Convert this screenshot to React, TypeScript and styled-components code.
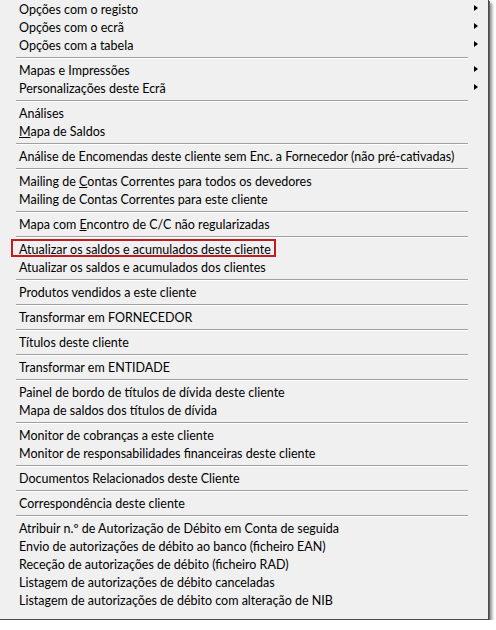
import React from "react";
import styled, {createGlobalStyle} from "styled-components";

const GlobalStyle = createGlobalStyle`
  html, body {
    margin: 0;
    padding: 0;
    background: #ffffff;
  }
`

const Menu = styled.div`
  width: 488px;
  background-color: #f0f0f0;
  border-right: 1px solid #4a4a4a;
  border-bottom: 1px solid #4a4a4a;
  box-shadow: 1px 1px 0 #666666, 3px 3px 3px rgba(0, 0, 0, 0.45);
  padding-bottom: 10px;
  font-family: "Lato", "Noto Sans", sans-serif;
  font-size: 12.5px;
  color: #000000;
`

const Item = styled.div`
  position: relative;
  height: 17px;
  padding-top: 1px;
  line-height: 18px;
  padding-left: 19px;
  white-space: nowrap;
`

const Marked = styled.span`
  position: relative;
  &::after {
    content: "";
    position: absolute;
    left: -8px;
    right: -5px;
    top: -3px;
    bottom: 0;
    border: 2px solid #c41a22;
  }
`

const Arrow = styled.span`
  position: absolute;
  left: 474px;
  top: 5px;
  width: 0;
  height: 0;
  border-top: 3.5px solid transparent;
  border-bottom: 3.5px solid transparent;
  border-left: 4px solid #000000;
`

const Separator = styled.div`
  height: 7px;
  display: flex;
  align-items: center;
  padding: 0 20px 0 16px;
  &::before {
    content: "";
    flex: 1;
    border-top: 1px solid #a0a0a0;
    border-bottom: 1px solid #ffffff;
  }
`

const Key = styled.span`
  text-decoration: underline;
`

type Entry = {label: React.ReactNode; sub?: boolean; marked?: boolean};

const groups: Entry[][] = [
    [
        {label: "Opções com o registo", sub: true},
        {label: "Opções com o ecrã", sub: true},
        {label: "Opções com a tabela", sub: true},
    ],
    [
        {label: "Mapas e Impressões", sub: true},
        {label: "Personalizações deste Ecrã", sub: true},
    ],
    [
        {label: "Análises"},
        {label: <><Key>M</Key>apa de Saldos</>},
    ],
    [
        {label: "Análise de Encomendas deste cliente sem Enc. a Fornecedor (não pré-cativadas)"},
    ],
    [
        {label: <>Mailing de <Key>C</Key>ontas Correntes para todos os devedores</>},
        {label: "Mailing de Contas Correntes para este cliente"},
    ],
    [
        {label: <>Mapa com <Key>E</Key>ncontro de C/C não regularizadas</>},
    ],
    [
        {label: "Atualizar os saldos e acumulados deste cliente", marked: true},
        {label: "Atualizar os saldos e acumulados dos clientes"},
    ],
    [{label: "Produtos vendidos a este cliente"}],
    [{label: "Transformar em FORNECEDOR"}],
    [{label: "Títulos deste cliente"}],
    [{label: "Transformar em ENTIDADE"}],
    [
        {label: "Painel de bordo de títulos de dívida deste cliente"},
        {label: "Mapa de saldos dos títulos de dívida"},
    ],
    [
        {label: "Monitor de cobranças a este cliente"},
        {label: "Monitor de responsabilidades financeiras deste cliente"},
    ],
    [{label: "Documentos Relacionados deste Cliente"}],
    [{label: "Correspondência deste cliente"}],
    [
        {label: "Atribuir n.º de Autorização de Débito em Conta de seguida"},
        {label: "Envio de autorizações de débito ao banco (ficheiro EAN)"},
        {label: "Receção de autorizações de débito (ficheiro RAD)"},
        {label: "Listagem de autorizações de débito canceladas"},
        {label: "Listagem de autorizações de débito com alteração de NIB"},
    ],
];

const App = () => {
    return (
        <>
            <GlobalStyle />
            <Menu>
                {groups.map((group, gi) => (
                    <React.Fragment key={gi}>
                        {gi > 0 && <Separator />}
                        {group.map((entry, ei) => (
                            <Item key={ei}>
                                {entry.marked ? <Marked>{entry.label}</Marked> : entry.label}
                                {entry.sub && <Arrow />}
                            </Item>
                        ))}
                    </React.Fragment>
                ))}
            </Menu>
        </>
    )
}

export default App;
